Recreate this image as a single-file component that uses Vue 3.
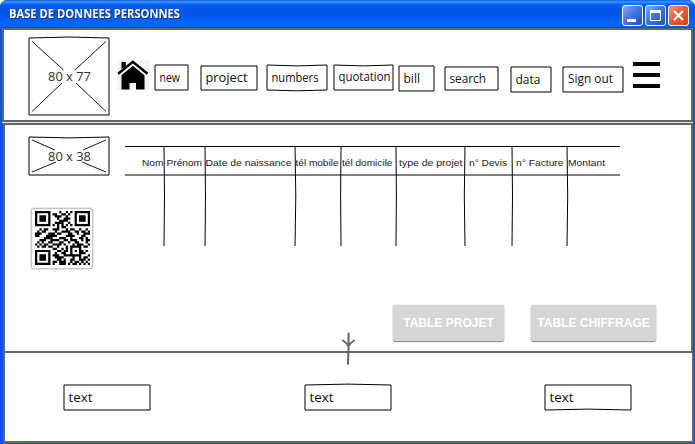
<script setup>
const nav = [
  { label: 'new', gap: 5, drop: 34, w: 33, h: 25, top: 0, bottom: 0, tx: 4.5, ty: 17, tw: 20.5 },
  { label: 'project', gap: 11, drop: 35, w: 56, h: 24, top: 0, bottom: 0, tx: 4.5, ty: 16, tw: 42 },
  { label: 'numbers', gap: 8, drop: 34, w: 60, h: 25, top: 1.8, bottom: 1.6, tx: 4.5, ty: 17, tw: 47 },
  { label: 'quotation', gap: 5, drop: 34, w: 59, h: 25, top: 1.8, bottom: 0, tx: 4.5, ty: 16, tw: 52 },
  { label: 'bill', gap: 4, drop: 35, w: 35, h: 25, top: 0, bottom: 0, tx: 4.5, ty: 17, tw: 16.5 },
  { label: 'search', gap: 9, drop: 36, w: 53, h: 23, top: 0, bottom: 0, tx: 4.5, ty: 16, tw: 36.5 },
  { label: 'data', gap: 11, drop: 36, w: 40, h: 25, top: 0, bottom: 0, tx: 4.5, ty: 17, tw: 25 },
  { label: 'Sign out', gap: 10, drop: 36, w: 60, h: 25, top: 0, bottom: 0, tx: 5, ty: 16, tw: 45 },
]

const fields = [
  { label: 'text', top: 0, bottom: 0 },
  { label: 'text', top: -1.8, bottom: 0 },
  { label: 'text', top: 0, bottom: -1.8 },
]

const columns = [
  { label: 'Nom', w: 39, x: 17, tw: 21.5, bend: 1 },
  { label: 'Prénom', w: 41, x: 2.5, tw: 35.5, bend: 1 },
  { label: 'Date de naissance', w: 90, x: 0.5, tw: 86, bend: 1.6 },
  { label: 'tél mobile', w: 46, x: 0.5, tw: 43, bend: -0.8 },
  { label: 'tél domicile', w: 55, x: 1, tw: 50.5, bend: 0.8 },
  { label: 'type de projet', w: 69, x: 3, tw: 63.5, bend: -1.4 },
  { label: 'n° Devis', w: 47, x: 4, tw: 38, bend: 1 },
  { label: 'n° Facture', w: 55, x: 4, tw: 47.5, bend: 1.4 },
  { label: 'Montant', w: 53, x: 1, tw: 37, bend: null },
]

const edges = (b) =>
  `M0 0Q${b.w / 2} ${b.top} ${b.w} 0V${b.h}Q${b.w / 2} ${b.h + b.bottom} 0 ${b.h}Z`

const qr = [
  '1111111000010010101111111',
  '1000001011001101001000001',
  '1011101001110010001011101',
  '1011101000100111001011101',
  '1011101000011110001011101',
  '1000001001111001001000001',
  '1111111010101010101111111',
  '0000000000101100000000000',
  '0010110011100010110010010',
  '0101100001001111001101101',
  '1110001110110001100100111',
  '1100011111000011110001100',
  '0000111100011100100011010',
  '0011100111100110111001011',
  '0101001100011001001100010',
  '1010110011110100010111001',
  '0101101100100010111110110',
  '0000000011001010100010000',
  '1111111000110110101011010',
  '1000001001001100100011100',
  '1011101011100111111110001',
  '1011101001111000010010110',
  '1011101000110100110011101',
  '1000001011011100101101010',
  '1111111010011101011010101',
]
const qrPath = qr
  .flatMap((row, y) => [...row].map((c, x) => (c === '1' ? `M${x} ${y}h1.03v1.03h-1.03z` : '')))
  .join('')
</script>

<template>
  <div class="window">
    <div class="titlebar">
      <svg class="title" width="190" height="28">
        <text x="9" y="18" textLength="171" lengthAdjust="spacingAndGlyphs">BASE DE DONNEES PERSONNES</text>
      </svg>
      <div class="controls">
        <span class="control"><svg width="19" height="19"><path d="M4 13h9v3H4z" fill="#fff" /></svg></span>
        <span class="control"><svg width="19" height="19"><path d="M4.5 5.5h10v9h-10zM4 6h11" fill="none" stroke="#fff" /><path d="M4 4h11v3H4z" fill="#fff" /></svg></span>
        <span class="control close"><svg width="19" height="19"><path d="M5 5l9 9M14 5l-9 9" stroke="#fff" stroke-width="2.1" /></svg></span>
      </div>
    </div>

    <header class="top">
      <svg class="logo sketch" width="82" height="80" viewBox="-1 -2 82 80">
        <path d="M0 0Q40 -2 80 0V77H0Z" />
        <path class="thin" d="M3 3.3L34.5 32M77 3.3L46 32M3 73.5L33 45M77 73.5L47 45" />
        <text x="19" y="43" textLength="43" lengthAdjust="spacingAndGlyphs" class="size">80 x 77</text>
      </svg>
      <svg class="home" width="32" height="30" viewBox="0 0 32 30">
        <path fill="#f4f4f4" d="M0 0h32v30H0z" />
        <path d="M4.5 15L15.8 5.5 27.5 15v14.5H19V23h-6.5v6.5h-8z" />
        <path d="M1.2 14.6L15.8 2.6 30.5 14.6" fill="none" stroke="#f4f4f4" stroke-width="4.6" />
        <path d="M4.5 2h4.3v4L4.5 9z" />
        <path d="M1.2 13.8L15.8 1.9 30.5 13.8" fill="none" stroke="#000" stroke-width="2.4" />
      </svg>
      <nav>
        <a
          v-for="b in nav"
          :key="b.label"
          :style="{ marginLeft: b.gap + 'px', marginTop: b.drop + 'px' }"
        >
          <svg class="sketch" :width="b.w + 2" :height="b.h + 2" :viewBox="`-1 -1 ${b.w + 2} ${b.h + 2}`">
            <path :d="edges(b)" />
            <text :x="b.tx" :y="b.ty" :textLength="b.tw" lengthAdjust="spacingAndGlyphs">{{ b.label }}</text>
          </svg>
        </a>
      </nav>
      <div class="burger"><i></i><i></i><i></i></div>
    </header>

    <main>
      <aside>
        <svg class="sketch" width="82" height="40" viewBox="-1 -1 82 40">
          <path d="M0 0Q40 1.8 80 0V38H0Z" />
          <path class="thin" d="M3 3L26 13M77 3L54 13M3 35L27 25M77 35L53 25" />
          <text x="19" y="24" textLength="43" lengthAdjust="spacingAndGlyphs" class="size">80 x 38</text>
        </svg>
        <div class="qr">
          <svg width="55" height="54" viewBox="0 0 25 25" preserveAspectRatio="none">
            <path :d="qrPath" />
          </svg>
        </div>
      </aside>
      <section>
        <div class="table">
          <div v-for="c in columns" :key="c.label" class="column">
            <svg class="sketch" :width="c.w" height="102" :viewBox="`0 -1 ${c.w} 102`">
              <path :d="`M0 .5H${c.w}M0 29H${c.w}`" />
              <path v-if="c.bend !== null" :d="`M${c.w} 0Q${c.w + c.bend} 50 ${c.w} 100`" />
              <text class="th" :x="c.x" y="20" :textLength="c.tw" lengthAdjust="spacingAndGlyphs">{{ c.label }}</text>
            </svg>
          </div>
        </div>
        <div class="actions">
          <button class="projet">TABLE PROJET</button>
          <button class="chiffrage">TABLE CHIFFRAGE</button>
        </div>
      </section>
      <svg class="arrow" width="16" height="34" viewBox="0 0 16 34">
        <path d="M8.6 1.5Q8.8 17 8 32M3 8.5Q6 10.5 8.5 14Q11 10.5 14 8.5" />
      </svg>
    </main>

    <footer>
      <svg v-for="(f, i) in fields" :key="i" class="sketch" width="88" height="27" viewBox="-1 -1 88 27">
        <path :d="edges({ ...f, w: 86, h: 25 })" />
        <text x="4.5" y="17" textLength="24" lengthAdjust="spacingAndGlyphs">{{ f.label }}</text>
      </svg>
    </footer>
  </div>
</template>

<style>
body { background: #fff; }
</style>

<style scoped>
* { box-sizing: border-box; }
svg { display: block; flex: none; }
.window {
  width: 695px; height: 444px; overflow: hidden;
  border-radius: 7px 7px 0 0;
  background: #0054e9;
  display: flex; flex-direction: column;
}
.titlebar {
  height: 28px; flex: none;
  display: flex; justify-content: space-between;
  background: linear-gradient(#0a5be0 0, #3c94ff 2px, #0c66f2 4px, #0056e6 7px, #0054e6 14px, #005cf5 18px, #0066ff 23px, #0060f8 27px, #0045d0 28px);
}
.title text {
  font: bold 12px "Open Sans", "Noto Sans", sans-serif;
  fill: #fff;
}
.title { filter: drop-shadow(1px 1px 0 #0a3a9c); }
.controls { display: flex; gap: 2px; padding: 5px 6px 0 0; }
.control {
  width: 21px; height: 21px;
  border: 1px solid #fff; border-radius: 3px;
  background: linear-gradient(135deg, #86a9f3, #4070e0 50%, #1f50d4);
}
.close { background: linear-gradient(135deg, #f0957a, #e25a34 50%, #d8410f); }
.top {
  width: 691px; height: 94px; flex: none;
  margin: 0 0 1px 2px;
  border: 2px solid #666;
  background: #fff;
  box-shadow: 0 1px #ece6d8;
  display: flex; align-items: flex-start;
}
.logo { margin: 6px 0 0 24px; }
.home { margin: 30px 0 0 7px; }
nav { display: flex; align-items: flex-start; }
.burger {
  width: 27px; margin: 32px 0 0 9px;
  display: grid; gap: 7px;
}
.burger i { height: 4px; background: #000; }
.sketch { overflow: visible; }
.sketch path { fill: none; stroke: #000; stroke-width: 1; }
.sketch .thin { stroke-width: 0.9; }
.sketch text { font: 12.5px "Open Sans", "Noto Sans", sans-serif; fill: #111; }
.sketch .size { font-size: 13.5px; fill: #333; }
.sketch .th { font: 9.8px "Liberation Sans", Arial, sans-serif; fill: #222; }
main {
  position: relative;
  width: 690px; height: 230px; flex: none;
  margin-left: 3px;
  border: 2px solid #666;
  background: #fff;
  display: flex;
}
aside { padding: 11px 0 0 23px; width: 120px; }
.qr {
  width: 62px; height: 61px; margin: 32px 0 0 3px;
  padding: 2px 0 0 3px;
  border: 1px solid #c4c4c4; border-radius: 2px;
  box-shadow: 0 0 2px #aaa;
}
section { padding-top: 20px; }
.table { display: flex; }
.actions { display: flex; gap: 27px; margin: 58px 0 0 268px; }
button {
  height: 36px; padding: 0;
  border: 0; border-radius: 2px;
  background: #d6d6d6; color: #fff;
  font: bold 12px "Liberation Sans", Arial, sans-serif;
  white-space: nowrap;
  box-shadow: 0 1px 1px #888, 0 0 2px #ccc;
}
.projet { width: 111px; }
.chiffrage { width: 125px; }
.arrow { position: absolute; left: 335px; top: 207px; }
.arrow path { fill: none; stroke: #666; stroke-width: 2; stroke-linecap: round; }
footer {
  width: 691px; height: 90px; flex: none;
  margin-left: 3px;
  border: solid #666; border-width: 0 2px 2px;
  background: #fff;
  display: flex; justify-content: space-between;
  padding: 31px 60px 0 58px;
}
</style>
